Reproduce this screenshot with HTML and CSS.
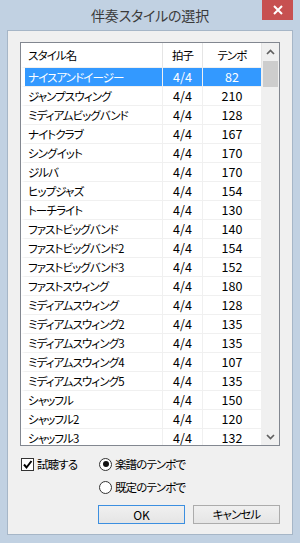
FILE: index.html
```html
<!DOCTYPE html>
<html>
<head>
  <meta charset="utf-8">
  <title>伴奏スタイルの選択</title>
  <link rel="stylesheet" href="styles.css">
</head>
<body>
  <div class="window">
    <div class="titlebar">
      <div></div>
      <div class="title">伴奏スタイルの選択</div>
      <div class="close">
        <svg width="10" height="10" viewBox="0 0 10 10"><path d="M1 1 L9 9 M9 1 L1 9" stroke="#fff" stroke-width="2"/></svg>
      </div>
    </div>

    <div class="client">
      <div class="list">
        <div class="table-wrap">
          <table class="styles">
            <colgroup>
              <col class="c-name">
              <col class="c-beat">
              <col class="c-tempo">
            </colgroup>
            <thead>
              <tr><th class="name">スタイル名</th><th>拍子</th><th>テンポ</th></tr>
            </thead>
            <tbody>
              <tr class="selected"><td class="name">ナイスアンドイージー</td><td>4/4</td><td>82</td></tr>
              <tr><td class="name">ジャンプスウィング</td><td>4/4</td><td>210</td></tr>
              <tr><td class="name">ミディアムビッグバンド</td><td>4/4</td><td>128</td></tr>
              <tr><td class="name">ナイトクラブ</td><td>4/4</td><td>167</td></tr>
              <tr><td class="name">シングイット</td><td>4/4</td><td>170</td></tr>
              <tr><td class="name">ジルバ</td><td>4/4</td><td>170</td></tr>
              <tr><td class="name">ヒップジャズ</td><td>4/4</td><td>154</td></tr>
              <tr><td class="name">トーチライト</td><td>4/4</td><td>130</td></tr>
              <tr><td class="name">ファストビッグバンド</td><td>4/4</td><td>140</td></tr>
              <tr><td class="name">ファストビッグバンド2</td><td>4/4</td><td>154</td></tr>
              <tr><td class="name">ファストビッグバンド3</td><td>4/4</td><td>152</td></tr>
              <tr><td class="name">ファストスウィング</td><td>4/4</td><td>180</td></tr>
              <tr><td class="name">ミディアムスウィング</td><td>4/4</td><td>128</td></tr>
              <tr><td class="name">ミディアムスウィング2</td><td>4/4</td><td>135</td></tr>
              <tr><td class="name">ミディアムスウィング3</td><td>4/4</td><td>135</td></tr>
              <tr><td class="name">ミディアムスウィング4</td><td>4/4</td><td>107</td></tr>
              <tr><td class="name">ミディアムスウィング5</td><td>4/4</td><td>135</td></tr>
              <tr><td class="name">シャッフル</td><td>4/4</td><td>150</td></tr>
              <tr><td class="name">シャッフル2</td><td>4/4</td><td>120</td></tr>
              <tr><td class="name">シャッフル3</td><td>4/4</td><td>132</td></tr>
            </tbody>
          </table>
        </div>
        <div class="scrollbar">
          <div class="arrow">
            <svg width="9" height="6" viewBox="0 0 9 6"><path d="M1 5 L4.5 1.5 L8 5" fill="none" stroke="#606060" stroke-width="1.7"/></svg>
          </div>
          <div class="track">
            <div class="thumb"></div>
          </div>
          <div class="arrow">
            <svg width="9" height="6" viewBox="0 0 9 6"><path d="M1 1 L4.5 4.5 L8 1" fill="none" stroke="#606060" stroke-width="1.7"/></svg>
          </div>
        </div>
      </div>

      <div class="options">
        <label class="check">
          <span class="box">
            <svg width="11" height="11" viewBox="0 0 11 11"><path d="M2 5.5 L4.5 8.5 L9.5 2" fill="none" stroke="#000" stroke-width="2"/></svg>
          </span>
          試聴する
        </label>
        <div class="radios">
          <label class="radio"><span class="circle on"></span>楽譜のテンポで</label>
          <label class="radio"><span class="circle"></span>既定のテンポで</label>
        </div>
      </div>

      <div class="buttons">
        <button class="btn default ok">OK</button>
        <button class="btn">キャンセル</button>
      </div>
    </div>
  </div>
</body>
</html>
```

FILE: styles.css
```css
html, body {
  margin: 0;
  padding: 0;
}

body {
  font-family: "Noto Sans CJK JP", "Noto Sans", sans-serif;
  font-size: 11.5px;
  letter-spacing: -0.9px;
  font-feature-settings: "palt";
  color: #000;
}

.window {
  width: 300px;
  height: 543px;
  box-sizing: border-box;
  background-color: #c1d1e2;
  padding: 0 7px 8px 7px;
  display: flex;
  flex-direction: column;
}

.titlebar {
  height: 30px;
  margin: 0 -7px;
  display: grid;
  grid-template-columns: 1fr auto 1fr;
}

.title {
  font-size: 14px;
  letter-spacing: -0.2px;
  line-height: 30px;
  color: #3a3a3a;
}

.close {
  justify-self: end;
  width: 31px;
  height: 20px;
  margin-right: 7px;
  background-color: #c75050;
  display: flex;
  align-items: center;
  justify-content: center;
}

.client {
  flex: 1;
  background-color: #f0f0f0;
  border: 1px solid #a6b6c7;
  padding: 11px 12px 10px 12px;
  display: flex;
  flex-direction: column;
}

.list {
  height: 404px;
  box-sizing: border-box;
  border: 1px solid #828790;
  background-color: #fff;
  display: flex;
  overflow: hidden;
}

.table-wrap {
  flex: 1;
  overflow: hidden;
}

.styles {
  width: 241px;
  table-layout: fixed;
  border-collapse: separate;
  border-spacing: 0;
}

.c-name { width: 142px; }
.c-beat { width: 40px; }

.styles th,
.styles td {
  padding: 0;
  border-right: 1px solid #f0f0f0;
  border-bottom: 1px solid #f0f0f0;
  text-align: center;
  white-space: nowrap;
  font-weight: normal;
}

.styles th {
  height: 24px;
  line-height: 24px;
  border-right-color: #e5e5e5;
}

.styles td {
  height: 18px;
  line-height: 18px;
  font-size: 12.5px;
  letter-spacing: 0;
}

.styles td.name {
  font-size: 11.5px;
  letter-spacing: -0.9px;
}

.styles .name {
  text-align: left;
  border-left: 4px solid #fff;
  padding-left: 3px;
}

.styles tr.selected td {
  background-color: #3399ff;
  color: #fff;
}

.scrollbar {
  width: 17px;
  background-color: #f0f0f0;
  display: flex;
  flex-direction: column;
}

.arrow {
  height: 17px;
  display: flex;
  align-items: center;
  justify-content: center;
}

.track {
  flex: 1;
  padding: 1px 1px 0 1px;
}

.thumb {
  height: 26px;
  background-color: #cdcdcd;
}

.options {
  margin-top: 11px;
  display: grid;
  grid-template-columns: 78px auto;
  padding-left: 1px;
}

.check,
.radio {
  display: flex;
  align-items: center;
  gap: 3px;
  height: 14px;
  line-height: 14px;
}

.box {
  width: 11px;
  height: 11px;
  border: 1px solid #333;
  background-color: #fff;
  display: flex;
}

.radios {
  display: flex;
  flex-direction: column;
  gap: 9px;
}

.circle {
  width: 11px;
  height: 11px;
  border: 1px solid #333;
  border-radius: 50%;
  background-color: #fff;
  display: flex;
  align-items: center;
  justify-content: center;
}

.circle.on::after {
  content: "";
  width: 6px;
  height: 6px;
  border-radius: 50%;
  background-color: #111;
}

.buttons {
  margin-top: auto;
  display: flex;
  justify-content: flex-end;
  gap: 8px;
}

.btn {
  width: 87px;
  height: 19px;
  padding: 0;
  font-family: inherit;
  font-size: 11.5px;
  letter-spacing: -0.9px;
  font-feature-settings: "palt";
  line-height: 17px;
  color: #000;
  border: 1px solid #acacac;
  background: linear-gradient(#f0f0f0, #e5e5e5);
}

.btn.ok {
  font-size: 12px;
  letter-spacing: 0;
}

.btn.default {
  border-color: #3c8fe0;
}
```
